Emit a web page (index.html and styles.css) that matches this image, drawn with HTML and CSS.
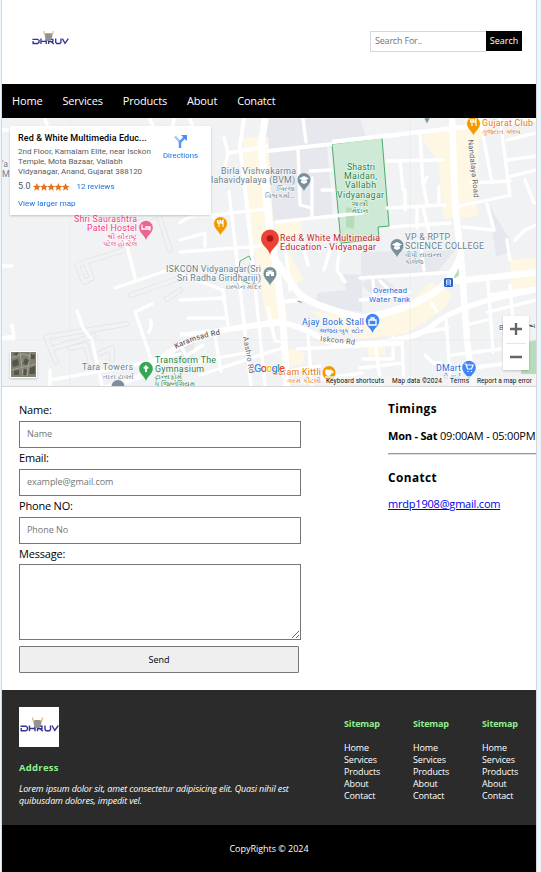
FILE: index.html
```html
<!DOCTYPE html>
<html lang="en">
<head>
<meta charset="utf-8">
<title>Dhruv - Contact</title>
<link rel="stylesheet" href="styles.css">
</head>
<body>
<svg width="0" height="0" class="defs">
  <symbol id="logo" viewBox="0 0 40 40">
    <rect width="40" height="40" fill="#fff"/>
    <g fill="none" stroke="#35358f" stroke-width="1.400">
      <path d="M1.500 19.300H7L8.500 20.500V22.500L7 23.700H2.200V21"/>
      <path d="M10.500 18.500V24.300M16 18.500V24.300M10.500 21.500H16"/>
      <path d="M18.500 24.300V19.300H23V21.700H18.500M21 21.700L24 24.300"/>
      <path d="M26 18.500V22.500L27 23.700H30.500L31.500 22.500V18.500"/>
      <path d="M33 18.500L35.800 23.500L39.300 18.500"/>
    </g>
    <path d="M14 13h9l-1 5-1.500 3h-4L15 18z" fill="#929294"/>
    <path d="M13.300 10.500l.8 2.800 1.800.7M23.600 10.500l-.8 2.800-1.800.7" fill="none" stroke="#e5b879" stroke-width="1.200"/>
  </symbol>
</svg>
<div class="page">
  <header class="top">
    <svg class="logo"><use href="#logo"/></svg>
    <form class="search"><input type="text" placeholder="Search For.."><button type="button">Search</button></form>
  </header>
  <nav class="nav"><a>Home</a><a>Services</a><a>Products</a><a>About</a><a>Conatct</a></nav>

  <section class="map">
    <svg class="canvas" viewBox="2 118 534 268" width="534" height="268">
      <defs>
        <g id="pin"><path d="M0 10C-1.500 5-6.800 3-6.800-2.500A6.800 6.800 0 0 1 6.800-2.500C6.800 3 1.500 5 0 10z"/></g>
        <g id="fork" fill="none" stroke="#fff" stroke-width="1.100"><path d="M-3-6v3h3v-3M-1.500-6V1M2.500 1V-6q-1.500 1-1 4"/></g>
        <path id="kr" d="M176 349Q196 338 224 334"/>
      </defs>
      <rect x="2" y="118" width="534" height="268" fill="#f1f2f4"/>
      <g fill="#e7e8ed">
        <path d="M265 119H361L355 143 327 147 333 216 274 222 264 150z"/>
        <path d="M282 119L360 119 367 139 267 150z"/>
        <path d="M361 252L455 250 436 274 361 280z"/>
        <path d="M317 293L346 290 343 274 362 275V312L316 306z"/>
        <path d="M489 205L510 240 511 252 496 257z"/>
        <path d="M180 342L195 338 192 365 172 360z"/>
        <path d="M376 273L395 287 370 293 361 284z"/>
      </g>
      <g fill="#fef7e4">
        <path d="M243 137H268L273 222 287 318 267 323 252 235 245 180z"/>
        <path d="M275 222L300 221 302 232 277 242z"/>
        <path d="M284 245L304 280 291 287z"/>
        <path d="M423 134L480 124 476 205 479 216 444 219 438 160 423 141z"/>
        <path d="M463 119H490L486 137 473 142z"/>
        <path d="M430 282L452 293 445 308 425 322 405 334 360 339 332 325 310 311 362 318 408 305z"/>
        <path d="M366 340L386 341 385 355 369 357z"/>
        <path d="M510 260L536 258V287L511 290z"/>
        <path d="M285 347L305 353 302 364 285 368z"/>
      </g>
      <path d="M332 144L382 138 389 226 378 227 379 239 341 243z" fill="#ceead6" stroke="#3ba45c" stroke-width=".9"/>
      <path d="M346 207l9 2-1 20-8-2zM522 343l14-3v34h-15zM454 270l6-5v9l-6 5z" fill="#b5ddb9"/>
      <!-- footpaths -->
      <g fill="none" stroke="#e1e3e6" stroke-width="5.500" stroke-linejoin="round" stroke-linecap="round">
        <path d="M77 265L124 250M77 265L84 282 92 278 86 264M46 337L126 324M46 337L56 362M54 348L94 336M70 348L86 345 92 368M100 353L112 348 112 360M131 295L180 278M167 299L180 290M120 221L158 213 170 250M132 226L180 204"/>
      </g>
      <g fill="none" stroke="#f1f2f4" stroke-width="4" stroke-linejoin="round" stroke-linecap="round">
        <path d="M77 265L124 250M77 265L84 282 92 278 86 264M46 337L126 324M46 337L56 362M54 348L94 336M70 348L86 345 92 368M100 353L112 348 112 360M131 295L180 278M167 299L180 290M120 221L158 213 170 250M132 226L180 204"/>
      </g>
      <!-- minor streets -->
      <g fill="none" stroke="#fff" stroke-width="3.300" stroke-linecap="round" stroke-linejoin="round">
        <path d="M2 266h10M12 325l2 11-12 2M2 339h12M77 311L83 328 92 340 102 386M50 380L120 368 180 354M50 370v16M115 288L136 281 180 266M136 281L128 250 120 229M152 304L135 312 152 362M150 320q3 5-1 12"/>
        <path d="M224 138L228 153 264 148M228 153L225 167M228 153L267 146M303 119L306 142M298 148L300 205 312 208V178M310 171L331 170M322 190H333M180 223Q190 214 205 216L266 209M229 192L235 243M246 195L251 245M312 208V218M276 222L362 213M208 210L214 218M180 240L205 233V246M180 252L260 246"/>
        <path d="M235 243L251 386M251 245L265 386M268 308L275 341H284M188 318H226M180 300L225 298M223 290L228 325M180 343L186 356 203 345M200 375L285 347M195 362L250 352M215 336L221 371M297 349L400 344M308 335L312 386M300 382L362 373M180 274L223 290M283 372L320 366"/>
        <path d="M387 161L443 160M420 133L423 185 427 177M400 160L403 190M405 190V210M387 208L445 205M417 208V228M423 208L429 232M424 188L427 205M439 187V205M391 227L450 223M455 207L507 196M480 119L492 183M470 183L510 181M500 119L510 196M487 204L494 230 463 227M507 140L536 133M507 160L536 156M508 177L536 170M525 180L534 203"/>
        <path d="M360 278L455 272M373 280L374 298M380 281l8 8M420 240L424 270M360 300Q390 298 410 292M431 303L437 311M446 320L451 386M452 355L500 349M450 370L510 363M402 340L404 386M360 368L402 363M375 342L381 386M363 359h30v-22M425 332L448 328M466 325L487 320M488 282L493 352M488 312L536 300M489 295L536 288M460 370L525 361M510 285L513 320M507 240L510 260M515 240L525 230 536 225M425 355l8 8h7"/>
        <path d="M2 130H36M45 119L51 136M150 119L157 135M174 119L172 132M190 119L203 152M205 160L210 202M285 245l5 45M302 241l6 24M330 250l-6 20M340 245l-3 25 8 12"/>
      </g>
      <path d="M332 144L268 151 259 151" stroke="#fff" stroke-width="4"/>
      <path d="M332 142L420 132 455 128 536 119M281 323L180 335" fill="none" stroke="#fff" stroke-width="4.500"/>
      <!-- main roads -->
      <g fill="none" stroke="#fff" stroke-linecap="round" stroke-linejoin="round">
        <path d="M244 119L240 145 252 250M264 119L261 146 266 183 273 240" stroke-width="4"/>
        <path d="M265 119L261 145 269 224 275 258 283 321 287 390M274 258L297 291Q307 305 362 318Q421 308 448 281L460 258" stroke-width="7"/>
        <path d="M452 115L455 204 461 257 467 340 473 390M447 282L540 272" stroke-width="6.500"/>
        <path d="M283 323Q298 325 327 341Q346 347 362 344Q406 342 430 328Q453 304 536 290M282 321L224 330Q188 338 164 356L139 377 105 388" stroke-width="5.500"/>
        <path d="M280 302L300 300" stroke-width="4"/>
      </g>
      <path d="M239 268l1-7 9-5 2 4M241 280l9 4" fill="none" stroke="#53ba70"/>
      <path d="M70 119V386M2 340H536M410 119V386" stroke="#e4e6e9" stroke-width=".5"/>

      <!-- place labels -->
      <g class="lbl">
        <g fill="#67818e">
          <text x="221" y="174" textLength="75">Birla Vishvakarma</text>
          <text x="211" y="183" textLength="84">lahavidyalaya (BVM)</text>
          <text class="gu" x="295" y="191">બિરલા</text>
          <text class="gu" x="295" y="198">વિશ્વકર્મા...</text>
          <text x="166" y="272" textLength="95">ISKCON Vidyanagar(Sri</text>
          <text x="177" y="281" textLength="84">Sri Radha Giridhariji)</text>
          <text class="gu" x="262" y="289">ઇસ્કોન મંદિર</text>
          <text x="405" y="240" textLength="45">VP &amp; RPTP</text>
          <text x="405" y="249" textLength="79">SCIENCE COLLEGE</text>
          <text class="gu start" x="405" y="257">વીપી સાયન્સ</text>
          <text class="gu start" x="405" y="264">કોલેજ</text>
          <text x="82" y="370" textLength="51">Tara Towers</text>
          <text class="gu" x="134" y="379">તારા ટાવર્સ</text>
          <text x="2" y="167">'a</text><text x="2" y="177">Ma</text>
        </g>
        <g fill="#ef4284">
          <text x="74" y="222" textLength="63">Shri Saurashtra</text>
          <text x="87" y="231" textLength="50">Patel Hostel</text>
          <text class="gu" x="137" y="239">શ્રી સૌરાષ્ટ્ર</text>
          <text class="gu" x="137" y="246">પટેલ હોસ્ટેલ</text>
        </g>
        <g fill="#258040">
          <text x="347" y="170" textLength="28">Shastri</text><text x="344" y="179" textLength="33">Maidan,</text>
          <text x="345" y="188" textLength="31">Vallabh</text><text x="337" y="198" textLength="47">Vidyanagar</text>
          <text class="gu mid" x="360" y="206">શાસ્ત્રી</text><text class="gu mid" x="360" y="213">મેદાન</text>
          <text x="155" y="363" textLength="61">Transform The</text><text x="155" y="372" textLength="49">Gymnasium</text>
          <text class="gu start" x="155" y="379">ટ્રાન્સફોર્મ</text><text class="gu start" x="155" y="385.500">ધ જિમ્નેશિયમ</text>
        </g>
        <g fill="#c5221f"><text x="280" y="241" textLength="100">Red &amp; White Multimedia</text><text x="280" y="250" textLength="96">Education - Vidyanagar</text></g>
        <g fill="#e77912">
          <text x="482" y="126" textLength="51">Gujarat Club</text><text class="gu start" x="482" y="134">ગુજરાત ક્લબ</text>
          <text x="272" y="375" textLength="49">Garam Kittli</text><text class="gu" x="321" y="383">ગરમ કીટલી</text>
        </g>
        <g fill="#286ce0">
          <text x="302" y="325" textLength="62">Ajay Book Stall</text><text class="gu" x="364" y="333">અજય બુક સ્ટોર</text>
          <text x="436" y="371" textLength="25">DMart</text><text class="gu" x="461" y="379">ડી માર્ટ</text>
          <text class="sm" x="373" y="293" textLength="34">Overhead</text><text class="sm" x="369" y="302" textLength="41">Water Tank</text>
        </g>
        <g class="road" fill="#5f6368">
          <text font-weight="500"><textPath href="#kr" textLength="47">Karamsad Rd</textPath></text>
          <text transform="translate(320 341) rotate(6)" textLength="35">Iskcon Rd</text>
          <text transform="translate(243 337) rotate(80)" textLength="37">Aashro Rd</text>
          <text transform="translate(468 140) rotate(84)" textLength="58">Nandalaya Road</text>
          <text x="499" y="330">B</text><text x="529" y="328">ય</text>
        </g>
      </g>

      <!-- markers -->
      <g fill="#78909c" stroke="#fff" stroke-width=".5">
        <use href="#pin" x="304" y="182"/><use href="#pin" x="270" y="276"/><use href="#pin" x="397" y="248"/><use href="#pin" x="118" y="389"/><path d="M424 118h6l-3 6z"/>
      </g>
      <path d="M299 178.500l5-2.500 5 2.500-5 2.500zM301 180.500v2l3 1.500 3-1.500v-2M392 244.500l5-2.500 5 2.500-5 2.500zM394 246.500v2l3 1.500 3-1.500v-2M266 276v-4h1.500v-2h1v2q1.500-4 3 0v-2h1v2h1.500v4h-3v-2h-1.500v2z" fill="#fff"/>
      <g fill="#f29900" stroke="#fff" stroke-width=".5"><use href="#pin" x="220.500" y="226"/><use href="#pin" x="473.500" y="126"/><use href="#pin" x="329" y="375"/></g>
      <use href="#fork" x="220.500" y="226"/><use href="#fork" x="473.500" y="125"/>
      <path d="M325.500 370h6v3q-1 3-3 3t-3-3zM332 371h1v2h-1" fill="#fff" stroke="#fff" stroke-width=".6"/>
      <g fill="#f06292"><use href="#pin" x="146" y="230"/></g><path d="M142 230v-5.500M142 229h8v1.500M145 227h5v2" fill="none" stroke="#fff" stroke-width="1.300"/>
      <g fill="#34a853"><use href="#pin" x="146" y="371"/></g><path d="M146 365l3 3-2 1v3h-2v-3l-2-1z" fill="#fff"/>
      <g fill="#4285f4"><use href="#pin" x="372.500" y="323"/><use href="#pin" x="469" y="370"/></g>
      <path d="M369 320h7v5h-7zM371 320v-2h3v2" fill="none" stroke="#fff" stroke-width="1.300"/>
      <path d="M464.500 364h1.500l1.500 5h4l1.500-4h-6M468 371v1M471.500 371v1" fill="none" stroke="#fff" stroke-width="1.200"/>
      <path d="M270 255C269 248 261 246 261 238.500A9 9 0 0 1 279 238.500C279 246 271 248 270 255z" fill="#ea4335"/><circle cx="270" cy="238.500" r="3.300" fill="#b31412"/>
      <rect x="444" y="278" width="9" height="9" rx="1.500" fill="#2563c9"/><path d="M446.500 280h4v4h-4zM446.500 282h4M446 286l1-1.500M451 286l-1-1.500" fill="none" stroke="#fff" stroke-width=".8"/>
      <path d="M297 301l5 2-2-2z" fill="#889" stroke="#999" stroke-width=".3"/>

      <text class="google" x="254" y="372" textLength="31"><tspan fill="#4285f4">G</tspan><tspan fill="#ea4335">o</tspan><tspan fill="#fbbc04">o</tspan><tspan fill="#4285f4">g</tspan><tspan fill="#34a853">l</tspan><tspan fill="#ea4335">e</tspan></text>
      <rect x="325" y="376" width="211" height="10" fill="#f5f5f5" opacity=".7"/>
      <g class="credit"><text x="326" y="383" textLength="58">Keyboard shortcuts</text><text x="392" y="383" textLength="50">Map data ©2024</text><text x="450" y="383" textLength="19">Terms</text><text x="477" y="383" textLength="55">Report a map error</text></g>
      <g class="thumb"><rect x="10" y="351" width="27" height="27" rx="1" fill="#fff"/><rect x="11" y="352" width="25" height="25" fill="#807f71"/>
        <path d="M11 358l12-4 13 4M20 352l3 24M30 352l-3 24M11 370l25-6" fill="none" stroke="#a5a292" stroke-width="1"/><path d="M12 361l6-2 1 6-6 2zM25 358l4 2-2 5-4-1zM30 368l5-2v8h-6zM14 371l5-1v5h-5zM24 369l3 1-1 5h-3zM13 354l5-2-1 4zM31 354l4 1v4h-4z" fill="#52564a"/></g>
    </svg>
    <div class="place">
      <div class="info"><h4>Red &amp; White Multimedia Educ...</h4>
        <p>2nd Floor, Kamalam Elite, near Isckon<br>Temple, Mota Bazaar, Vallabh<br>Vidyanagar, Anand, Gujarat 388120</p>
        <div class="rating"><span>5.0</span><svg width="37" height="8" viewBox="0 0 37 8" fill="#e7711b"><path id="star" d="M3.800 0l1.100 2.700 2.900.2-2.200 1.900.7 2.900-2.500-1.600-2.500 1.600.7-2.900L-.2 2.900l2.900-.2z"/><use href="#star" x="7.200"/><use href="#star" x="14.400"/><use href="#star" x="21.600"/><use href="#star" x="28.800"/></svg><a>12 reviews</a></div>
        <a class="larger">View larger map</a></div>
      <div class="directions"><svg width="13" height="13" viewBox="0 0 13 13"><path d="M1 1.500L6 7" fill="none" stroke="#a5c6f7" stroke-width="2.500"/><path d="M6 13V7l4.500-4.500" fill="none" stroke="#5c98ef" stroke-width="2.500"/><path d="M7 0h6v6z" fill="#4b8df0"/></svg><a>Directions</a></div>
    </div>
    <div class="zoom"><svg width="26" height="54" viewBox="0 0 26 54"><path d="M7 13h12M13 7v12M7 41h12" stroke="#666" stroke-width="2.400"/><path d="M3 27.500h20" stroke="#e6e6e6"/></svg></div>
  </section>

  <main class="contact">
    <form class="form">
      <label>Name:</label><input type="text" placeholder="Name">
      <label>Email:</label><input type="text" placeholder="example@gmail.com">
      <label>Phone NO:</label><input type="text" placeholder="Phone No">
      <label>Message:</label><textarea></textarea>
      <button type="button">Send</button>
    </form>
    <aside class="side">
      <h3>Timings</h3>
      <p><b>Mon - Sat</b> <span class="hours">09:00AM - 05:00PM</span></p>
      <hr>
      <h3>Conatct</h3>
      <p class="mail"><a href="#">mrdp1908@gmail.com</a></p>
    </aside>
  </main>

  <footer class="footer">
    <div class="about"><svg class="logo"><use href="#logo"/></svg><h5>Address</h5>
      <address>Lorem ipsum dolor sit, amet consectetur adipisicing elit. Quasi nihil est<br><span>quibusdam dolores, impedit vel.</span></address></div>
    <div class="maps">
      <div><h5>Sitemap</h5><a>Home</a><a>Services</a><a>Products</a><a>About</a><a>Contact</a></div>
      <div><h5>Sitemap</h5><a>Home</a><a>Services</a><a>Products</a><a>About</a><a>Contact</a></div>
      <div><h5>Sitemap</h5><a>Home</a><a>Services</a><a>Products</a><a>About</a><a>Contact</a></div>
    </div>
  </footer>
  <div class="copy">CopyRights © 2024</div>
</div>
</body>
</html>
```
FILE: styles.css
```css
* { box-sizing: border-box; }
body { margin: 0; background: #edf6fd; font-family: "Open Sans", sans-serif; font-size: 11px; color: #000; overflow: hidden; }
.defs { position: absolute; }
.page { width: 536px; height: 872px; margin-left: 1px; border-left: 1px solid #d0d9e8; border-right: 1px solid #d8d8da; background: #fff; }
.logo { display: block; width: 40px; height: 40px; }
input, button, textarea { font-family: inherit; border-radius: 0; margin: 0; }
input::placeholder { color: #757575; opacity: 1; }
.top { height: 84px; padding: 0 14px 0 29px; display: flex; align-items: center; justify-content: space-between; }
.top .logo { width: 38px; height: 38px; margin-top: -5px; }
.search { display: flex; align-items: flex-start; margin-top: -2px; }
.search input { width: 116px; height: 21px; border: 1px solid #d8d8d8; border-right: 0; padding: 0 4px 2px; font-size: 9px; letter-spacing: -.2px; }
.search button { width: 36px; height: 20px; background: #000; color: #fff; border: 0; padding: 0 0 1px; font-size: 9px; }
.nav { height: 34px; background: #000; color: #fff; display: flex; gap: 20px; padding: 0 10px; align-items: center; font-size: 11px; line-height: 34px; letter-spacing: -.17px; }
.map { position: relative; height: 269px; border-bottom: 1px solid #d5d7da; overflow: hidden; font-family: Roboto, sans-serif; }
.canvas { display: block; width: 534px; }
.lbl { font: 400 8.800px Roboto, sans-serif; stroke: #fff; stroke-width: 1.200px; stroke-opacity: .7; paint-order: stroke; }
.gu { font-size: 6.800px; text-anchor: end; }
.gu.start { text-anchor: start; }
.gu.mid { text-anchor: middle; }
.sm { font-size: 8px; }
.road { font-size: 7.500px; }
.google { font: 500 11px Roboto, sans-serif; stroke: #fff; stroke-width: 1px; paint-order: stroke; }
.credit { font: 6.500px Roboto, sans-serif; fill: #111; }
.thumb, .zoom, .place { filter: drop-shadow(0 1px 1px #0003); }
.place { position: absolute; left: 8px; top: 8px; width: 201px; height: 89px; padding: 6px 13px 0 8px; background: #fff; border-radius: 1px; display: flex; justify-content: space-between; white-space: nowrap; }
.place a { color: #1a73e8; }
.info { width: 135px; }
.place h4 { margin: 0; font-size: 9px; line-height: 12px; font-weight: 500; letter-spacing: .1px; }
.place p { margin: 3px 0 0; font-size: 8px; line-height: 10px; color: #5b5b5b; }
.rating { display: flex; align-items: center; margin-top: 4px; font-size: 9px; line-height: 11px; color: #555; }
.rating svg { margin: 0 7px 0 2px; }
.rating a, .larger { font-size: 8px; font-weight: 400; }
.larger { display: block; margin-top: 7px; line-height: 10px; }
.directions { display: flex; flex-direction: column; align-items: center; gap: 3px; padding-top: 3px; font-size: 7.800px; line-height: 10px; }
.zoom { position: absolute; right: 7px; top: 198px; width: 26px; height: 54px; background: #fff; }
.contact { height: 303px; display: flex; justify-content: space-between; padding-left: 17px; }
.form { width: 282px; padding-top: 12px; }
.form label { display: block; height: 22px; line-height: 22px; letter-spacing: -.2px; }
.form input { display: block; width: 282px; height: 27px; margin: 0 0 -1px; border: 1px solid #767676; padding: 0 7px 2px; font-size: 9px; letter-spacing: -.05px; }
.form textarea { display: block; width: 282px; height: 76px; margin-top: -1px; border: 1px solid #767676; }
.form button { display: block; width: 280px; height: 27px; margin-top: 6px; border: 1px solid #767676; border-radius: 1px; background: #efefef; color: #000; font-size: 9px; }
.side { width: 148px; padding-top: 13px; white-space: nowrap; }
.side h3 { margin: 0; font-size: 11.800px; line-height: 16px; letter-spacing: .45px; }
.side p { margin: 12px 0 0; line-height: 15px; letter-spacing: -.2px; }
.side hr { margin: 10px 0 14px; border: 0; border-top: 1px solid #999; border-bottom: 1px solid #ddd; }
.side .mail { margin-top: 11px; }
.side a { color: #00e; }
.footer { height: 135px; background: #2b2b2b; color: #fff; padding: 17px 17px 0; display: flex; justify-content: space-between; font-size: 9px; line-height: 12px; }
.footer h5 { margin: 0; color: #90ee90; font-size: 9px; line-height: 12px; letter-spacing: -.15px; }
.footer .about h5 { margin: 15px 0 9px; font-size: 9.500px; letter-spacing: .25px; }
address { white-space: nowrap; font-size: 9px; letter-spacing: -.14px; }
.maps { display: flex; gap: 33px; padding: 11px 1px 0 0; }
.maps > div { width: 36px; }
.maps a { display: block; letter-spacing: -.15px; }
.maps h5 { margin-bottom: 12px; }
.copy { height: 47px; background: #000; color: #fff; text-align: center; line-height: 47px; font-size: 9px; letter-spacing: -.03px; }
```
